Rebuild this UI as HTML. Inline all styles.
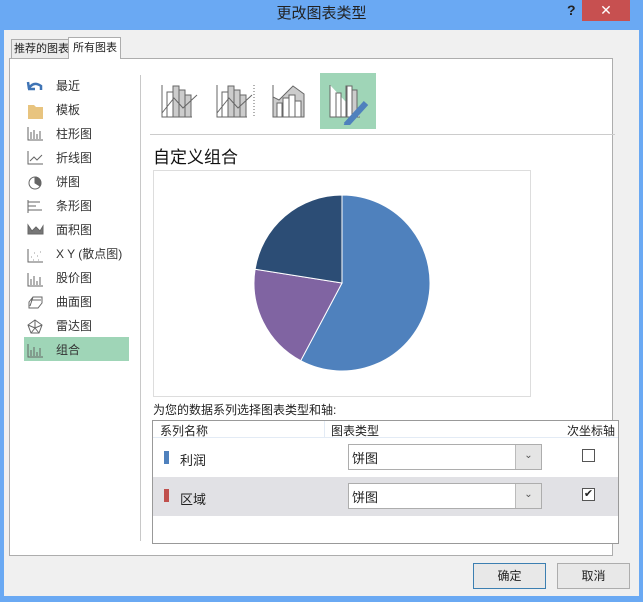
<!DOCTYPE html><html><head><meta charset="utf-8"><style>
*{margin:0;padding:0;box-sizing:border-box}
body{width:643px;height:602px;background:#6aa9f3;font-family:"Liberation Sans","Noto Sans CJK SC",sans-serif;font-size:12px;color:#222;position:relative;overflow:hidden;white-space:nowrap}
.a{position:absolute}
.title{left:0;top:0;width:643px;height:30px;text-align:center;line-height:28px;font-size:15px;color:#222}
.win{left:4px;top:30px;width:635px;height:566px;background:#f0f0f0}
.lst{left:56px;font-size:12px;color:#333}
</style></head><body>
<div class="a title">更改图表类型</div>
<div class="a" style="left:567px;top:2px;font-size:14px;font-weight:bold;color:#222">?</div>
<div class="a" style="left:582px;top:0;width:48px;height:21px;background:#c75050;color:#fff;text-align:center;line-height:21px;font-size:14px">✕</div>
<div class="a win"></div>
<div class="a" style="left:11px;top:39px;width:58px;height:20px;border:1px solid #adadad;border-bottom:none;background:#ececec;padding-left:2px;line-height:19px;font-size:11px">推荐的图表</div>
<div class="a" style="left:68px;top:37px;width:53px;height:22px;border:1px solid #adadad;border-bottom:none;background:#fff;padding-left:4px;line-height:20px;z-index:2;font-size:11px">所有图表</div>
<div class="a" style="left:9px;top:58px;width:604px;height:498px;background:#fff;border:1px solid #adadad"></div>
<div class="a" style="left:140px;top:75px;width:1px;height:466px;background:#c8c8c8"></div>
<div class="a" style="left:24px;top:337px;width:105px;height:24px;background:#9fd5b7"></div>
<svg class="a" style="left:24px;top:77px" width="24" height="290" viewBox="0 0 24 290">
<path d="M5 12 L4 5 M4 12 L11 12 M5 11 Q10 4 17 9 L17 13" stroke="#3f74b5" stroke-width="2.5" fill="none"/>
<path d="M4 28 h6 l2 2 h7 v12 h-15z" fill="#e8c47f"/>
<g stroke="#666" fill="none"><path d="M4 50v13h15M7 62v-7M10 62v-9M13 62v-5M16 62v-8"/>
<path d="M4 74v13h15M6 84l4-4 3 3 5-5"/>
<circle cx="11" cy="106" r="6"/><path d="M11 106V100A6 6 0 0 1 16 109z" fill="#666"/>
<path d="M4 123v13M4 125h12M4 129h8M4 133h14"/>
<path d="M4 148 l4 6 4-4 4 4 3-5 v8 h-15z" fill="#777"/>
<path d="M4 172v13h15"/><path d="M7 180h1M10 176h1M13 179h1M16 175h1M9 183h1M14 183h1" stroke="#999"/>
<path d="M4 196v13h15M7 208v-6M10 208v-9M13 208v-4M16 208v-8"/>
<path d="M5 225l4-5h9v6l-4 5h-9z M7 223h10M9 220l-3 9"/>
<path d="M11 243l7 5-3 8h-8l-3-8z M11 243v8l7-3M11 251l4 5M11 251l-4 5M11 251l-7-3"/>
<path d="M4 267v13h15M7 279v-6M10 279v-9M13 279v-4M16 279v-8"/></g>
</svg>
<div class="a lst" style="top:77px">最近</div>
<div class="a lst" style="top:101px">模板</div>
<div class="a lst" style="top:125px">柱形图</div>
<div class="a lst" style="top:149px">折线图</div>
<div class="a lst" style="top:173px">饼图</div>
<div class="a lst" style="top:197px">条形图</div>
<div class="a lst" style="top:221px">面积图</div>
<div class="a lst" style="top:245px">X Y (散点图)</div>
<div class="a lst" style="top:269px">股价图</div>
<div class="a lst" style="top:293px">曲面图</div>
<div class="a lst" style="top:317px">雷达图</div>
<div class="a lst" style="top:341px">组合</div>
<div class="a" style="left:320px;top:73px;width:56px;height:56px;background:#9fd5b7"></div>
<svg class="a" style="left:150px;top:65px" width="240" height="60" viewBox="0 0 240 60" stroke="#666" fill="none">
<path d="M12 20v32h30M17 52V27h6v25M23 52V21h6v31" /><rect x="29" y="25" width="6" height="27" fill="#ccc"/><rect x="35" y="30" width="6" height="22" fill="#ccc"/><rect x="23" y="21" width="6" height="31" fill="#ccc"/><path d="M12 48l12-15 9 10 14-13"/>
<path d="M67 20v32h30M72 52V27h6v25"/><rect x="78" y="21" width="6" height="31" fill="#ccc"/><rect x="84" y="25" width="6" height="27" fill="#ccc"/><rect x="90" y="30" width="6" height="22" fill="#ccc"/><path d="M67 48l12-15 9 10 14-13"/><path d="M104 20v32" stroke-dasharray="1 2"/>
<path d="M123 20v12l6 3 14-14 11 8v23h-31z" fill="#ccc"/><rect x="127" y="38" width="5" height="14" fill="#fff"/><rect x="133" y="33" width="6" height="19" fill="#fff"/><rect x="139" y="30" width="6" height="22" fill="#fff"/><rect x="145" y="36" width="6" height="16" fill="#fff"/>
<path d="M180 20v32h30M186 52V28h5v24M196 52V21h6v31" fill="#fff"/><rect x="202" y="25" width="5" height="27" fill="#ccc"/><rect x="186" y="28" width="5" height="24" fill="#fff"/><rect x="197" y="21" width="5" height="31" fill="#fff"/>
<path d="M196 60l20-22" stroke="#4f81bd" stroke-width="6"/><path d="M193 63l3-5" stroke="#4f81bd" stroke-width="2"/>
</svg>
<div class="a" style="left:150px;top:134px;width:465px;height:1px;background:#ccc"></div>
<div class="a" style="left:153px;top:143px;font-size:17px;color:#111">自定义组合</div>
<svg class="a" style="left:153px;top:170px" width="378" height="227" viewBox="0 0 378 227">
<rect x="0.5" y="0.5" width="377" height="226" fill="#fff" stroke="#ddd"/>
<path d="M189 113L189 25A88 88 0 1 1 147.7 190.7Z" fill="#4f81bd" stroke="#fff"/>
<path d="M189 113L147.7 190.7A88 88 0 0 1 102.1 99.2Z" fill="#8064a2" stroke="#fff"/>
<path d="M189 113L102.1 99.2A88 88 0 0 1 189 25Z" fill="#2c4d75" stroke="#fff"/>
</svg>
<div class="a" style="left:153px;top:401px">为您的数据系列选择图表类型和轴:</div>
<div class="a" style="left:152px;top:420px;width:467px;height:124px;border:1px solid #999;background:#fff"></div>
<div class="a" style="left:153px;top:421px;width:465px;height:17px;border-bottom:1px solid #e3ebf5"></div>
<div class="a" style="left:324px;top:421px;width:1px;height:17px;background:#e3ebf5"></div>
<div class="a" style="left:160px;top:422px">系列名称</div>
<div class="a" style="left:331px;top:422px">图表类型</div>
<div class="a" style="left:567px;top:422px">次坐标轴</div>
<div class="a" style="left:153px;top:477px;width:465px;height:39px;background:#e1e1e5"></div>
<div class="a" style="left:164px;top:451px;width:5px;height:13px;background:#4f81bd"></div>
<div class="a" style="left:164px;top:489px;width:5px;height:13px;background:#c0504d"></div>
<div class="a" style="left:180px;top:450px;font-size:13px">利润</div>
<div class="a" style="left:180px;top:489px;font-size:13px">区域</div>
<div class="a" style="left:348px;top:444px;width:194px;height:26px;border:1px solid #adadad;background:#fff;padding:3px 0 0 3px;font-size:13px">饼图</div>
<div class="a" style="left:515px;top:445px;width:26px;height:24px;background:#e5e5e5;border-left:1px solid #bbb;text-align:center;line-height:22px;font-size:10px;color:#555">⌄</div>
<div class="a" style="left:348px;top:483px;width:194px;height:26px;border:1px solid #adadad;background:#fff;padding:3px 0 0 3px;font-size:13px">饼图</div>
<div class="a" style="left:515px;top:484px;width:26px;height:24px;background:#e5e5e5;border-left:1px solid #bbb;text-align:center;line-height:22px;font-size:10px;color:#555">⌄</div>
<div class="a" style="left:582px;top:449px;width:13px;height:13px;border:1px solid #555;background:#fff"></div>
<div class="a" style="left:582px;top:488px;width:13px;height:13px;border:1px solid #555;background:#fff;font-size:11px;line-height:11px;text-align:center">✔</div>
<div class="a" style="left:473px;top:563px;width:73px;height:26px;border:1px solid #3c7fb1;background:#e8e8e8;text-align:center;line-height:24px">确定</div>
<div class="a" style="left:557px;top:563px;width:73px;height:26px;border:1px solid #adadad;background:#e8e8e8;text-align:center;line-height:24px">取消</div>
</body></html>
